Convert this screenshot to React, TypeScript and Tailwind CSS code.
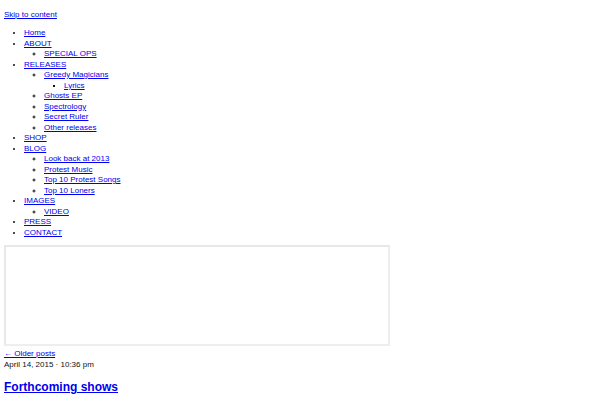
import React from "react";

const link = "text-[#0000ee] underline";

type Item = { label: string; children?: Item[] };

const menu: Item[] = [
  { label: "Home" },
  { label: "ABOUT", children: [{ label: "SPECIAL OPS" }] },
  {
    label: "RELEASES",
    children: [
      { label: "Greedy Magicians", children: [{ label: "Lyrics" }] },
      { label: "Ghosts EP" },
      { label: "Spectrology" },
      { label: "Secret Ruler" },
      { label: "Other releases" },
    ],
  },
  { label: "SHOP" },
  {
    label: "BLOG",
    children: [
      { label: "Look back at 2013" },
      { label: "Protest Music" },
      { label: "Top 10 Protest Songs" },
      { label: "Top 10 Loners" },
    ],
  },
  { label: "IMAGES", children: [{ label: "VIDEO" }] },
  { label: "PRESS" },
  { label: "CONTACT" },
];

function Menu({ items, level }: { items: Item[]; level: number }) {
  const cls =
    level === 0 ? "list-disc pl-[20px]" : level === 1 ? "list-[circle] pl-[20px]" : "list-[square] pl-[20px]";
  return (
    <ul className={cls}>
      {items.map((it) => (
        <li key={it.label}>
          <a href="#" className={link}>
            {it.label}
          </a>
          {it.children && <Menu items={it.children} level={level + 1} />}
        </li>
      ))}
    </ul>
  );
}

export default function App() {
  return (
    <div
      className="bg-white text-[#111] px-[4px] pt-[10px] text-[8px] leading-[10.5px] min-h-[400px]"
      style={{ fontFamily: '"Liberation Sans", Arial, sans-serif' }}
    >
      <a href="#" className={link}>
        Skip to content
      </a>
      <nav className="mt-[7.5px]">
        <Menu items={menu} level={0} />
      </nav>
      <div className="mt-[7px] w-[386px] h-[101px] border-2 border-t-[#e8e8e8] border-l-[#e8e8e8] border-r-[#eeeeee] border-b-[#eeeeee]" />
      <div className="mt-[3px]">
        <a href="#" className={link}>
          ← Older posts
        </a>
      </div>
      <div>April 14, 2015 · 10:36 pm</div>
      <h2 className="mt-[10px] text-[12px] leading-[14px] font-bold">
        <a href="#" className={link}>
          Forthcoming shows
        </a>
      </h2>
    </div>
  );
}
